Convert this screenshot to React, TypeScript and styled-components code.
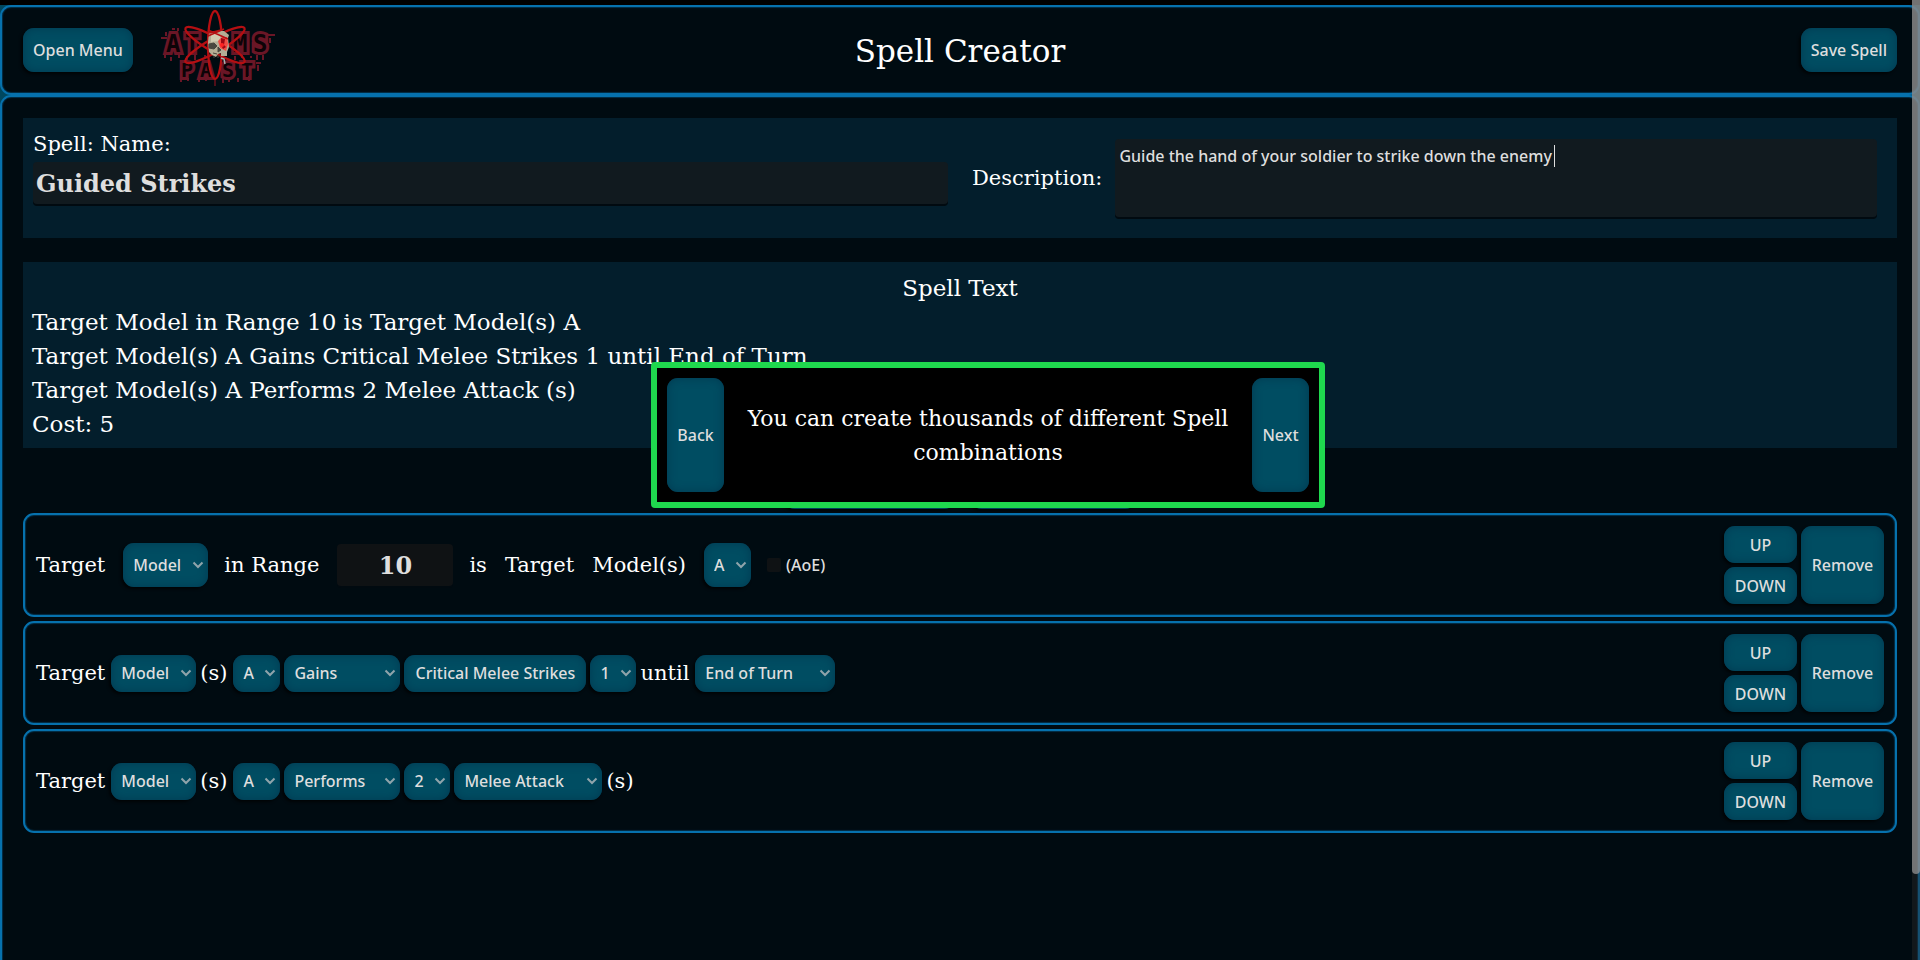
import React from "react";
import styled, { createGlobalStyle, css } from "styled-components";

const GlobalStyle = createGlobalStyle`
  * { box-sizing: border-box; }
  body { margin: 0; background: #000; }
  button, select, input, textarea { margin: 0; border: 0; font: inherit; color: inherit; outline: 0; }
`;

const serif = `"DejaVu Serif", serif`;

const Page = styled.div`
  height: 100vh;
  padding-top: 5px;
  overflow: hidden;
  display: flex;
  flex-direction: column;
  background: linear-gradient(#000 5px, #00475f 5px);
  color: #dedede;
  font: 500 16px/24px "Noto Sans", sans-serif;
`;

const frame = css`
  border: 2px solid #0671ad;
  border-radius: 11px;
  background: #000b11;
  box-shadow: inset 0 0 1px 1px #03304a;
`;

const Header = styled.header`
  ${frame}
  flex: none;
  height: 90px;
  padding: 0 21px;
  display: grid;
  grid-template-columns: 1fr auto 1fr;
  align-items: center;
`;

const Brand = styled.div`
  display: flex;
  align-items: center;
  gap: 28px;
`;

const Title = styled.h1`
  margin: 0;
  padding-top: 2px;
  color: #fff;
  font: 400 31px/40px ${serif};
`;

const surface = css`
  border-radius: 11px;
  background: #004d62;
  color: #dedede;
  box-shadow: inset 0 0 10px #003a52, -2px 2px 3px rgba(0, 0, 0, 0.7);
`;

const Button = styled.button<{ $height?: number; $width?: number }>`
  ${surface}
  height: ${(p) => (p.$height ? `${p.$height}px` : "auto")};
  width: ${(p) => (p.$width ? `${p.$width}px` : "auto")};
  padding: 0 10px;
  cursor: pointer;
  white-space: nowrap;
`;

const EndButton = styled(Button)`
  justify-self: end;
`;

const Main = styled.main`
  ${frame}
  flex: none;
  min-height: 100vh;
  padding: 21px;
  display: flex;
  flex-direction: column;
`;

const Details = styled.section`
  height: 120px;
  margin-bottom: 24px;
  display: grid;
  grid-template-columns: 1fr 1fr;
  background: #031e2c;
`;

const NameField = styled.div`
  padding: 8px 12px 0 10px;
  display: flex;
  flex-direction: column;
`;

const DescriptionField = styled.div`
  padding: 0 20px 0 12px;
  display: flex;
  align-items: center;
  gap: 13px;
`;

const Label = styled.label`
  color: #fff;
  font: 400 21px/36px ${serif};
`;

const field = css`
  border-radius: 4px;
  background: #111a1f;
  box-shadow: 0 2px 0 #010a10;
  color: #dedede;
`;

const NameInput = styled.input`
  ${field}
  height: 42px;
  padding: 0 3px;
  font: 700 24px/40px ${serif};
`;

const DescriptionBox = styled.div`
  position: relative;
  flex: 1;
  display: flex;
`;

const DescriptionInput = styled.textarea`
  ${field}
  flex: 1;
  height: 78px;
  padding: 5px 4px;
  resize: none;
  caret-color: transparent;
`;

const Caret = styled.span`
  position: absolute;
  top: 6px;
  left: 439px;
  width: 1px;
  height: 22px;
  background: #dedede;
`;

const SpellText = styled.section`
  padding: 9px 9px 7px;
  background: #031e2c;
  color: #fff;
  font: 400 23px/34px ${serif};
`;

const SpellTitle = styled.h2`
  margin: 0;
  font: inherit;
  text-align: center;
`;

const Line = styled.p`
  margin: 0;
`;

const AddBar = styled.div`
  padding: 17px 0 4px;
  display: flex;
  justify-content: center;
  gap: 16px;
`;

const Rows = styled.div`
  display: flex;
  flex-direction: column;
  gap: 4px;
`;

const Row = styled.section`
  ${frame}
  padding: 11px;
  display: flex;
  align-items: center;
  justify-content: space-between;
`;

const Terms = styled.div<{ $loose?: boolean }>`
  display: flex;
  align-items: center;
  gap: ${(p) => (p.$loose ? 16 : 4)}px;
`;

const Term = styled.span`
  padding-right: 2px;
  color: #fff;
  font: 400 21px/36px ${serif};
  white-space: nowrap;
`;

const Actions = styled.div`
  display: grid;
  grid-template-columns: 73px 83px;
  grid-template-rows: 37px 37px;
  gap: 4px;
`;

const RemoveButton = styled(Button)`
  grid-column: 2;
  grid-row: 1 / 3;
`;

const Picker = styled.div<{ $width: number; $tall?: boolean }>`
  position: relative;
  width: ${(p) => p.$width}px;
  height: ${(p) => (p.$tall ? 44 : 37)}px;
`;

const PickerSelect = styled.select`
  ${surface}
  appearance: none;
  width: 100%;
  height: 100%;
  padding: 0 10px;
`;

const Chevron = styled.svg`
  position: absolute;
  right: 4px;
  top: 50%;
  margin-top: -4px;
  pointer-events: none;
`;

const RangeInput = styled.input`
  ${field}
  width: 116px;
  height: 42px;
  background: #0f1214;
  font: 700 24px/40px ${serif};
  text-align: center;
`;

const CheckLabel = styled.label`
  display: flex;
  align-items: center;
  gap: 5px;
`;

const CheckBox = styled.input`
  appearance: none;
  width: 14px;
  height: 14px;
  border-radius: 2px;
  background: #0f1214;
`;

const Tour = styled.aside`
  position: fixed;
  top: 362px;
  left: 651px;
  width: 674px;
  height: 146px;
  padding: 10px;
  display: flex;
  justify-content: space-between;
  border: 6px solid #1fd84e;
  border-radius: 4px;
  background: #000;
`;

const TourText = styled.p`
  margin: 0;
  padding-top: 2px;
  flex: 1;
  align-self: center;
  color: #fff;
  font: 400 22px/34px ${serif};
  text-align: center;
`;

const ScrollTrack = styled.div`
  position: fixed;
  top: 0;
  right: 0;
  bottom: 0;
  width: 8px;
  background: rgba(40, 40, 40, 0.45);
`;

const ScrollThumb = styled.div`
  height: 91%;
  border-radius: 0 0 4px 4px;
  background: rgba(155, 155, 155, 0.7);
`;

function Select({ value, label, width, tall }: { value: string; label: string; width: number; tall?: boolean }) {
  return (
    <Picker $width={width} $tall={tall}>
      <PickerSelect aria-label={label} defaultValue={value}>
        <option>{value}</option>
      </PickerSelect>
      <Chevron width="12" height="8" viewBox="0 0 12 8" fill="none" stroke="#8fa4ab" strokeWidth="2">
        <path d="M1.5 1.5 6 6 10.5 1.5" />
      </Chevron>
    </Picker>
  );
}

function RowActions() {
  return (
    <Actions>
      <Button type="button">UP</Button>
      <RemoveButton type="button">Remove</RemoveButton>
      <Button type="button">DOWN</Button>
    </Actions>
  );
}

function Logo() {
  return (
    <svg width="116" height="84" viewBox="0 0 116 84" role="img" aria-label="Atoms Past">
      <g
        fontFamily="DejaVu Sans Mono, monospace"
        fontWeight="700"
        fill="#0d0307"
        stroke="#6a1626"
        strokeWidth="6"
        paintOrder="stroke"
      >
        <text x="5 24 72 92" y="44" fontSize="24">ATMS</text>
        <text x="20 39 61 80" y="69" fontSize="20">PAST</text>
      </g>
      <path
        d="M0 30h6M5 24v4M11 21h3M17 23v-3M4 46v4M10 49v4M18 47v3M26 48v4M34 47v5M44 47v3M74 48v4M81 47v3M90 48v2M96 47v5M102 47v5M106 27h8M109 30v5M20 70v4M27 70v3M38 71v3M45 69v4M62 71v4M68 71v3M77 70v4M88 68v5M95 55h5M97 57v6"
        stroke="#6a1626"
        strokeWidth="2"
        fill="none"
      />
      <g fill="none" stroke="#b50f12" strokeWidth="2.3">
        <ellipse cx="54" cy="37" rx="7" ry="34" />
        <ellipse cx="54" cy="37" rx="7" ry="34" transform="rotate(60 54 37)" />
        <ellipse cx="54" cy="37" rx="7" ry="34" transform="rotate(-60 54 37)" />
      </g>
      <path d="M54 72v6" stroke="#6d101b" strokeWidth="1.5" />
      <path d="M48 25l4-2h11l5 4-1 3 1 9-2 5v4h-6v-3l-3 1-2 3-4-2-3-3-1-10z" fill="#b4ad95" />
      <path d="M50 27l6-2 4 2-2 6-8 1z" fill="#d2cab0" />
      <path d="M48 36l5-1 3 3-3 3-5-1zM57 39l3 3-3 2zM52 45l4 1M53 48v2M57 47v3" fill="#4a473f" stroke="#4a473f" />
      <path d="M57 33l4-4h5l1 7-2 7-6-3z" fill="#f24a43" />
      <path d="M60 30l4 1-1 6 2 2-3 2-2-4z" fill="#9c0712" />
      <circle cx="61" cy="37" r="2" fill="#ff2424" />
      <path d="M60 50l3 1 1 5" stroke="#a8b0ae" strokeWidth="1.5" fill="none" />
      <path d="M48 25l12-3M47 28l16-7M47 22l20 9" stroke="#b50f12" strokeWidth="1.5" />
    </svg>
  );
}

export default function App() {
  return (
    <Page>
      <GlobalStyle />
      <Header>
        <Brand>
          <Button type="button" $height={44}>Open Menu</Button>
          <Logo />
        </Brand>
        <Title>Spell Creator</Title>
        <EndButton type="button" $height={44}>Save Spell</EndButton>
      </Header>

      <Main>
        <Details>
          <NameField>
            <Label htmlFor="spell-name">Spell: Name:</Label>
            <NameInput id="spell-name" defaultValue="Guided Strikes" />
          </NameField>
          <DescriptionField>
            <Label htmlFor="spell-description">Description:</Label>
            <DescriptionBox>
              <DescriptionInput
                id="spell-description"
                spellCheck={false}
                defaultValue="Guide the hand of your soldier to strike down the enemy"
              />
              <Caret aria-hidden="true" />
            </DescriptionBox>
          </DescriptionField>
        </Details>

        <SpellText>
          <SpellTitle>Spell Text</SpellTitle>
          <Line>Target Model in Range 10 is Target Model(s) A</Line>
          <Line>Target Model(s) A Gains Critical Melee Strikes 1 until End of Turn</Line>
          <Line>Target Model(s) A Performs 2 Melee Attack (s)</Line>
          <Line>Cost: 5</Line>
        </SpellText>

        <AddBar>
          <Button type="button" aria-label="Add target" $height={44} $width={171} />
          <Button type="button" aria-label="Add effect" $height={44} $width={165} />
        </AddBar>

        <Rows>
          <Row>
            <Terms $loose>
              <Term>Target</Term>
              <Select label="Target type" value="Model" width={85} tall />
              <Term>in Range</Term>
              <RangeInput aria-label="Range" defaultValue="10" />
              <Term>is</Term>
              <Term>Target</Term>
              <Term>Model(s)</Term>
              <Select label="Target name" value="A" width={47} tall />
              <CheckLabel>
                <CheckBox type="checkbox" />
                (AoE)
              </CheckLabel>
            </Terms>
            <RowActions />
          </Row>
          <Row>
            <Terms>
              <Term>Target</Term>
              <Select label="Target type" value="Model" width={85} />
              <Term>(s)</Term>
              <Select label="Target name" value="A" width={47} />
              <Select label="Action" value="Gains" width={116} />
              <Button type="button" $height={37} $width={182}>Critical Melee Strikes</Button>
              <Select label="Amount" value="1" width={46} />
              <Term>until</Term>
              <Select label="Duration" value="End of Turn" width={140} />
            </Terms>
            <RowActions />
          </Row>
          <Row>
            <Terms>
              <Term>Target</Term>
              <Select label="Target type" value="Model" width={85} />
              <Term>(s)</Term>
              <Select label="Target name" value="A" width={47} />
              <Select label="Action" value="Performs" width={116} />
              <Select label="Amount" value="2" width={46} />
              <Select label="Attack" value="Melee Attack" width={148} />
              <Term>(s)</Term>
            </Terms>
            <RowActions />
          </Row>
        </Rows>
      </Main>

      <Tour>
        <Button type="button" $width={57}>Back</Button>
        <TourText>You can create thousands of different Spell combinations</TourText>
        <Button type="button" $width={57}>Next</Button>
      </Tour>

      <ScrollTrack>
        <ScrollThumb />
      </ScrollTrack>
    </Page>
  );
}
